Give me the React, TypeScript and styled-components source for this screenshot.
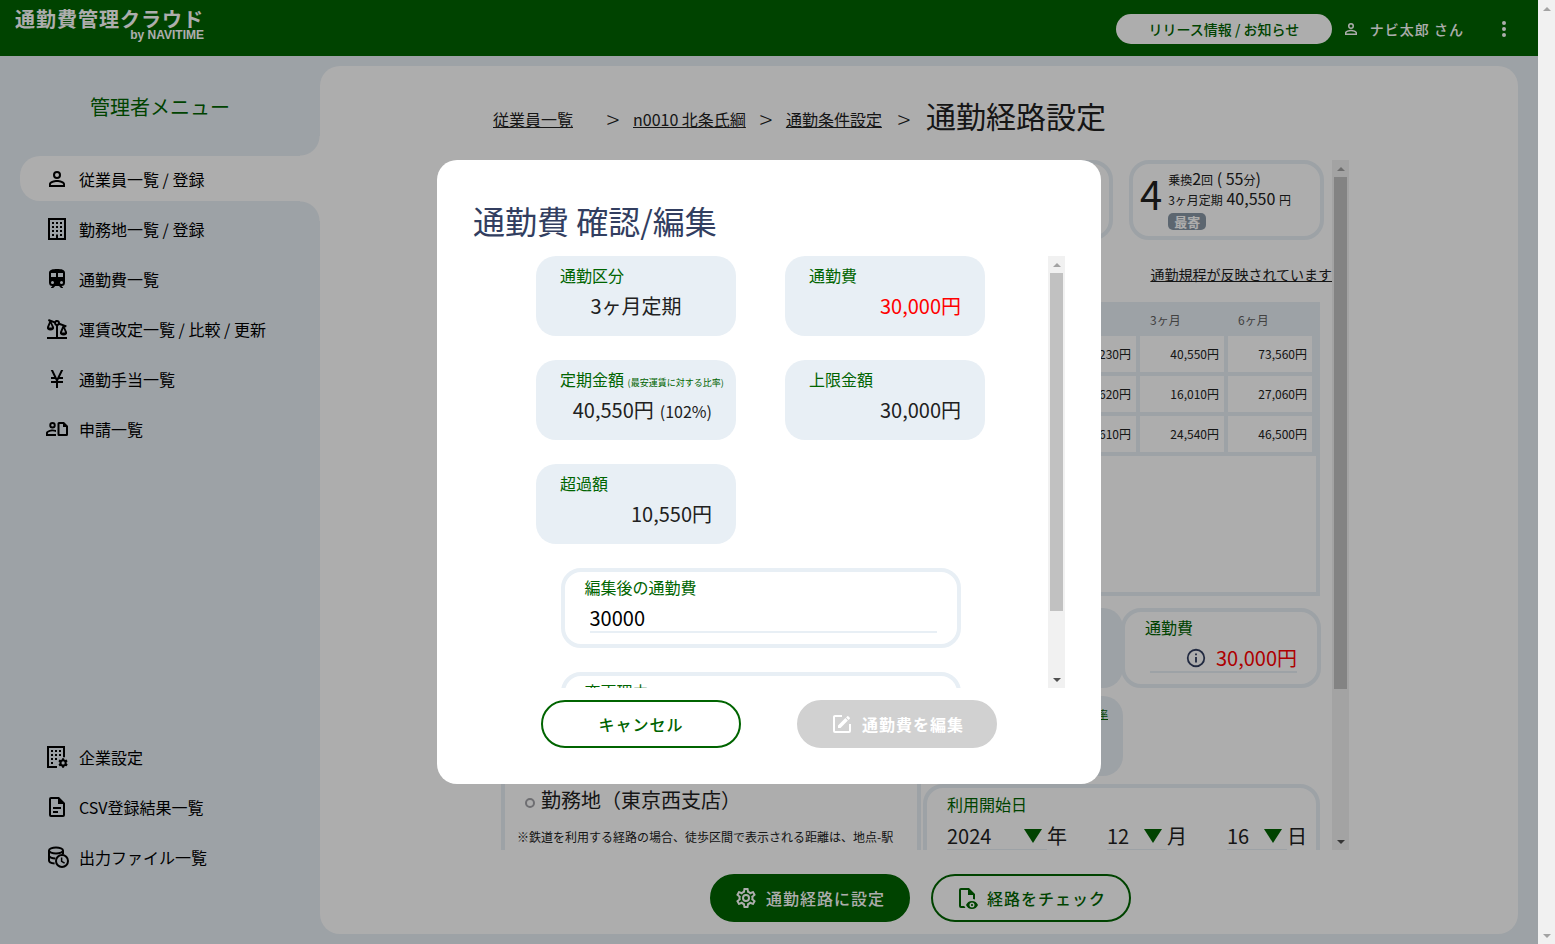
import React from "react";
import styled, { createGlobalStyle, css } from "styled-components";

const green = "#006400";
const pale = "#e8eff5";
const navy = "#323e60";

const GlobalStyle = createGlobalStyle`
  *, *::before, *::after { box-sizing: border-box; }
  body {
    margin: 0;
    font-family: "Noto Sans CJK JP", "Noto Sans", sans-serif;
    font-size: 16px;
    line-height: 24px;
    color: #212121;
  }
  button, input, select { font: inherit; color: inherit; margin: 0; }
  button { cursor: pointer; }
  a { color: inherit; }
  h1, h2, p, ul, ol, dl, dd { margin: 0; padding: 0; font-weight: 400; }
  ul, ol { list-style: none; }
`;

/* ---------- icons ---------- */

const paths = {
  account:
    "M12,4A4,4 0 0,1 16,8A4,4 0 0,1 12,12A4,4 0 0,1 8,8A4,4 0 0,1 12,4M12,6A2,2 0 0,0 10,8A2,2 0 0,0 12,10A2,2 0 0,0 14,8A2,2 0 0,0 12,6M12,13C14.67,13 20,14.33 20,17V20H4V17C4,14.33 9.33,13 12,13M12,14.9C9.03,14.9 5.9,16.36 5.9,17V18.1H18.1V17C18.1,16.36 14.97,14.9 12,14.9Z",
  building:
    "M19,3V21H13V17.5H11V21H5V3H19M15,7H17V5H15V7M11,7H13V5H11V7M7,7H9V5H7V7M15,11H17V9H15V11M11,11H13V9H11V11M7,11H9V9H7V11M15,15H17V13H15V15M11,15H13V13H11V15M7,15H9V13H7V15M7,19H9V17H7V19M15,19H17V17H15V19M21,1H3V23H21V1Z",
  train:
    "M12,2C8,2 4,2.5 4,6V15.5A3.5,3.5 0 0,0 7.5,19L6,20.5V21H8.23L10.23,19H14L16,21H18V20.5L16.5,19A3.5,3.5 0 0,0 20,15.5V6C20,2.5 16.42,2 12,2M7.5,17A1.5,1.5 0 0,1 6,15.5A1.5,1.5 0 0,1 7.5,14A1.5,1.5 0 0,1 9,15.5A1.5,1.5 0 0,1 7.5,17M11,10H6V6H11V10M13,10V6H18V10H13M16.5,17A1.5,1.5 0 0,1 15,15.5A1.5,1.5 0 0,1 16.5,14A1.5,1.5 0 0,1 18,15.5A1.5,1.5 0 0,1 16.5,17Z",
  scale:
    "M13,20V8.8C13.5,8.6 14,8.3 14.3,7.9L17.5,9.1L15,15C14.5,17 16,18.5 18.5,18.5C21,18.5 22.5,17 22,15L19.7,9.9L21,10.4L21.7,8.5L15,6C15,4.3 13.7,3 12,3C11,3 10.1,3.5 9.5,4.2L3.7,2.1L3,4L4.3,4.5L2,10C1.5,12 3,13.5 5.5,13.5C8,13.5 9.5,12 9,10L6.6,5.3L9.1,6.2C9.1,7.4 9.9,8.4 11,8.8V20H2V22H22V20H13M12,5A1,1 0 0,1 13,6A1,1 0 0,1 12,7A1,1 0 0,1 11,6A1,1 0 0,1 12,5M5.5,6.6L7.1,10.5H3.9L5.5,6.6M18.5,11.4L20.1,15.5H16.9L18.5,11.4Z",
  yen:
    "M11,21V16H6V14H11V13.71L10.16,12H6V10H9.19L5.77,3H8L12,11.18L16,3H18.23L14.82,10H18V12H13.84L13,13.71V14H18V16H13V21H11Z",
  request:
    "M7.5,5A3.2,3.2 0 0,1 10.7,8.2A3.2,3.2 0 0,1 7.5,11.4A3.2,3.2 0 0,1 4.3,8.2A3.2,3.2 0 0,1 7.5,5M7.5,6.9A1.3,1.3 0 0,0 6.2,8.2A1.3,1.3 0 0,0 7.5,9.5A1.3,1.3 0 0,0 8.8,8.2A1.3,1.3 0 0,0 7.5,6.9M7.5,12.4C8.6,12.4 9.9,12.6 11,13V15C9.9,14.6 8.6,14.3 7.5,14.3C5,14.3 2.9,15.4 2.9,16V17.1H11V19H1V16C1,13.6 5.3,12.4 7.5,12.4M14,5H19L23,9V17.5A1.5,1.5 0 0,1 21.5,19H14A1.5,1.5 0 0,1 12.5,17.5V6.5A1.5,1.5 0 0,1 14,5M14.5,7V17H21V10H18V7H14.5Z",
  buildingCog:
    "M2,1H20V12.2H18V3H4V21H7V23H2V1M6,5H8V7H6V5M10,5H12V7H10V5M14,5H16V7H14V5M6,9H8V11H6V9M10,9H12V11H10V9M14,9H16V11H14V9M6,13H8V15H6V13M10,13H12V15H10V13M6,17H8V19H6V17M7,21H12V23H7V21M17.2,13.2H19L19.3,14.5L20.2,15L21.5,14.6L22.6,16.3L21.6,17.2V18.6L22.7,19.6L21.6,21.3L20.2,20.9L19.3,21.4L19,22.8H17.2L16.8,21.4L15.9,20.9L14.6,21.3L13.5,19.6L14.5,18.6V17.2L13.4,16.3L14.5,14.6L15.9,15L16.8,14.5L17.2,13.2M18.1,16.3A1.6,1.6 0 0,0 16.5,17.9A1.6,1.6 0 0,0 18.1,19.5A1.6,1.6 0 0,0 19.7,17.9A1.6,1.6 0 0,0 18.1,16.3Z",
  file:
    "M6,2A2,2 0 0,0 4,4V20A2,2 0 0,0 6,22H18A2,2 0 0,0 20,20V8L14,2H6M6,4H13V9H18V20H6V4M8,12V14H16V12H8M8,16V18H13V16H8Z",
  cog:
    "M12,8A4,4 0 0,1 16,12A4,4 0 0,1 12,16A4,4 0 0,1 8,12A4,4 0 0,1 12,8M12,10A2,2 0 0,0 10,12A2,2 0 0,0 12,14A2,2 0 0,0 14,12A2,2 0 0,0 12,10M10,22C9.75,22 9.54,21.82 9.5,21.58L9.13,18.93C8.5,18.68 7.96,18.34 7.44,17.94L4.95,18.95C4.73,19.03 4.46,18.95 4.34,18.73L2.34,15.27C2.21,15.05 2.27,14.78 2.46,14.63L4.57,12.97L4.5,12L4.57,11L2.46,9.37C2.27,9.22 2.21,8.95 2.34,8.73L4.34,5.27C4.46,5.05 4.73,4.96 4.95,5.05L7.44,6.05C7.96,5.66 8.5,5.32 9.13,5.07L9.5,2.42C9.54,2.18 9.75,2 10,2H14C14.25,2 14.46,2.18 14.5,2.42L14.87,5.07C15.5,5.32 16.04,5.66 16.56,6.05L19.05,5.05C19.27,4.96 19.54,5.05 19.66,5.27L21.66,8.73C21.79,8.95 21.73,9.22 21.54,9.37L19.43,11L19.5,12L19.43,13L21.54,14.63C21.73,14.78 21.79,15.05 21.66,15.27L19.66,18.73C19.54,18.95 19.27,19.04 19.05,18.95L16.56,17.95C16.04,18.34 15.5,18.68 14.87,18.93L14.5,21.58C14.46,21.82 14.25,22 14,22H10M11.25,4L10.88,6.61C9.68,6.86 8.62,7.5 7.85,8.39L5.44,7.35L4.69,8.65L6.8,10.2C6.4,11.37 6.4,12.64 6.8,13.8L4.68,15.36L5.43,16.66L7.86,15.62C8.63,16.5 9.68,17.14 10.87,17.38L11.24,20H12.76L13.13,17.39C14.32,17.14 15.37,16.5 16.14,15.62L18.57,16.66L19.32,15.36L17.2,13.81C17.6,12.64 17.6,11.37 17.2,10.2L19.31,8.65L18.56,7.35L16.15,8.39C15.38,7.5 14.32,6.86 13.12,6.62L12.75,4H11.25Z",
  fileEye:
    "M17,18C17.56,18 18,18.44 18,19C18,19.56 17.56,20 17,20C16.44,20 16,19.56 16,19C16,18.44 16.44,18 17,18M17,15C14.27,15 11.94,16.66 11,19C11.94,21.34 14.27,23 17,23C19.73,23 22.06,21.34 23,19C22.06,16.66 19.73,15 17,15M17,21.5A2.5,2.5 0 0,1 14.5,19A2.5,2.5 0 0,1 17,16.5A2.5,2.5 0 0,1 19.5,19A2.5,2.5 0 0,1 17,21.5M9.27,20H6V4H13V9H18V13.07C18.7,13.15 19.36,13.32 20,13.56V8L14,2H6A2,2 0 0,0 4,4V20A2,2 0 0,0 6,22H10.5C10,21.41 9.59,20.73 9.27,20Z",
  edit:
    "M5,3C3.89,3 3,3.89 3,5V19A2,2 0 0,0 5,21H19A2,2 0 0,0 21,19V12H19V19H5V5H12V3H5M17.78,4C17.61,4 17.43,4.07 17.3,4.2L16.08,5.41L18.58,7.91L19.8,6.7C20.06,6.44 20.06,6 19.8,5.75L18.25,4.2C18.12,4.07 17.95,4 17.78,4M15.37,6.12L8,13.5V16H10.5L17.87,8.62L15.37,6.12Z",
  info:
    "M11,9H13V7H11M12,20C7.59,20 4,16.41 4,12C4,7.59 7.59,4 12,4C16.41,4 20,7.59 20,12C20,16.41 16.41,20 12,20M12,2A10,10 0 0,0 2,12A10,10 0 0,0 12,22A10,10 0 0,0 22,12A10,10 0 0,0 12,2M11,17H13V11H11V17Z",
  dots:
    "M12,16A2,2 0 0,1 14,18A2,2 0 0,1 12,20A2,2 0 0,1 10,18A2,2 0 0,1 12,16M12,10A2,2 0 0,1 14,12A2,2 0 0,1 12,14A2,2 0 0,1 10,12A2,2 0 0,1 12,10M12,4A2,2 0 0,1 14,6A2,2 0 0,1 12,8A2,2 0 0,1 10,6A2,2 0 0,1 12,4Z",
};

type IconName = keyof typeof paths | "databaseClock";

const IconSvg = styled.svg`
  flex: none;
  display: block;
  fill: currentColor;
`;

function Icon({ name, size = 24 }: { name: IconName; size?: number }) {
  return (
    <IconSvg width={size} height={size} viewBox="0 0 24 24" aria-hidden="true">
      {name === "databaseClock" ? (
        <g fill="none" stroke="currentColor" strokeWidth="2">
          <ellipse cx="11" cy="5.5" rx="7" ry="3" />
          <path d="M4,5.5V15.5C4,17 6.2,18.3 9.6,18.6M4,10.5C4,12.2 7,13.5 10.4,13.5M18,5.5V9.6" />
          <circle cx="17" cy="16" r="6" />
          <path d="M16.6,12.4V16.4L19.6,18.2" strokeWidth="1.5" />
        </g>
      ) : (
        <path fillRule={name === "scale" ? "evenodd" : "nonzero"} d={paths[name]} />
      )}
    </IconSvg>
  );
}

/* ---------- scroll bars ---------- */

const Track = styled.div`
  flex: none;
  width: 17px;
  display: flex;
  flex-direction: column;
  align-items: center;
  background: #f1f1f1;
`;
const Arrow = styled.span<{ $down?: boolean; $idle?: boolean }>`
  flex: none;
  width: 17px;
  height: 17px;
  display: grid;
  place-items: center;
  &::before {
    content: "";
    border: 4px solid transparent;
    border-top-width: 0;
    border-bottom: 4px solid ${(p) => (p.$idle ? "#a3a3a3" : "#505050")};
    ${(p) => p.$down && "rotate: 180deg;"}
  }
`;
const Thumb = styled.span`
  width: 13px;
  background: #c1c1c1;
`;
const Rail = styled.span<{ $share: number }>`
  flex: 1;
  min-height: 0;
  display: grid;
  grid-template-rows: ${(p) => p.$share}fr ${(p) => 100 - p.$share}fr;
`;

function ScrollBar({ share }: { share?: number }) {
  return (
    <Track aria-hidden="true">
      <Arrow $idle />
      <Rail $share={share ?? 100}>{share ? <Thumb /> : null}</Rail>
      <Arrow $down $idle={!share} />
    </Track>
  );
}

/* ---------- page frame ---------- */

const Shell = styled.div`
  display: flex;
  height: 100vh;
`;
const AppArea = styled.div`
  position: relative;
  flex: 1;
  min-width: 0;
  display: flex;
  flex-direction: column;
  background: ${pale};
`;
const Header = styled.header`
  flex: none;
  height: 56px;
  display: flex;
  justify-content: space-between;
  padding: 0 22px 0 15px;
  background: ${green};
  color: #fff;
`;
const Brand = styled.div`
  display: flex;
  flex-direction: column;
  align-items: flex-end;
  padding-top: 8px;
`;
const BrandName = styled.span`
  font-size: 20px;
  line-height: 22px;
  font-weight: 700;
  letter-spacing: 1px;
`;
const BrandBy = styled.span`
  font-family: "Liberation Sans", sans-serif;
  font-size: 12px;
  line-height: 10px;
  font-weight: 700;
`;
const HeaderTools = styled.div`
  display: flex;
  align-items: center;
  padding-top: 1px;
`;
const NewsButton = styled.button`
  width: 216px;
  height: 30px;
  margin-right: 10px;
  border: 0;
  border-radius: 15px;
  background: #fff;
  color: ${green};
  font-size: 14px;
  font-weight: 500;
`;
const UserName = styled.span`
  display: flex;
  align-items: center;
  gap: 10px;
  margin-right: 28px;
  font-size: 14px;
  font-weight: 500;
  letter-spacing: 1px;
`;
const MenuButton = styled.button`
  display: flex;
  padding: 0;
  border: 0;
  background: none;
`;
const Body = styled.div`
  flex: 1;
  min-height: 0;
  display: flex;
`;

/* ---------- side menu ---------- */

const Sidebar = styled.nav`
  flex: none;
  width: 320px;
  display: flex;
  flex-direction: column;
  padding: 0 0 65px 20px;
`;
const SidebarTitle = styled.h2`
  height: 100px;
  padding-right: 20px;
  font-size: 20px;
  line-height: 102px;
  text-align: center;
  color: ${green};
`;
const MenuList = styled.ul`
  display: flex;
  flex-direction: column;
  gap: 5px;
  &:last-child { margin-top: auto; }
`;
const MenuLink = styled.a<{ $active?: boolean }>`
  position: relative;
  display: flex;
  align-items: center;
  gap: 10px;
  height: 45px;
  padding-left: 25px;
  color: #000;
  text-decoration: none;
  ${(p) =>
    p.$active &&
    css`
      background: #fff;
      border-radius: 20px 0 0 20px;
      &::before,
      &::after {
        content: "";
        position: absolute;
        right: 0;
        width: 20px;
        height: 20px;
        background: radial-gradient(circle at 0 0, transparent 19px, #fff 20px);
      }
      &::before { bottom: 100%; }
      &::after { top: 100%; transform: scaleY(-1); }
    `}
`;

const mainMenu: [IconName, string][] = [
  ["account", "従業員一覧 / 登録"],
  ["building", "勤務地一覧 / 登録"],
  ["train", "通勤費一覧"],
  ["scale", "運賃改定一覧 / 比較 / 更新"],
  ["yen", "通勤手当一覧"],
  ["request", "申請一覧"],
];
const subMenu: [IconName, string][] = [
  ["buildingCog", "企業設定"],
  ["file", "CSV登録結果一覧"],
  ["databaseClock", "出力ファイル一覧"],
];

function Menu({ items, active }: { items: [IconName, string][]; active?: number }) {
  return (
    <MenuList>
      {items.map(([icon, label], i) => (
        <li key={label}>
          <MenuLink href="#" $active={i === active}>
            <Icon name={icon} />
            {label}
          </MenuLink>
        </li>
      ))}
    </MenuList>
  );
}

/* ---------- main panel ---------- */

const Panel = styled.main`
  flex: 1;
  min-width: 0;
  display: flex;
  flex-direction: column;
  align-items: center;
  margin: 10px 20px 10px 0;
  border-radius: 20px;
  background: #fff;
`;
const Breadcrumb = styled.ol`
  flex: none;
  width: 860px;
  height: 94px;
  display: flex;
  align-items: center;
  padding: 12px 0 0 4px;
  li:first-child { width: 100px; }
  li:nth-last-child(2) { width: 44px; }
`;
const Separator = styled.li`
  width: 40px;
  font-size: 24px;
  font-weight: 300;
  text-align: center;
`;
const PageTitle = styled.h1`
  padding-bottom: 8px;
  font-size: 30px;
  line-height: 44px;
`;
const ScrollFrame = styled.div`
  flex: 1;
  min-height: 0;
  width: 860px;
  display: flex;
`;
const ScrollBody = styled.div`
  flex: 1;
  min-width: 0;
  overflow: hidden;
  padding-left: 7px;
`;
const RouteTabs = styled.div`
  display: flex;
  gap: 16px;
`;
const RouteTab = styled.button`
  flex: none;
  width: 195px;
  height: 80px;
  display: flex;
  align-items: flex-start;
  gap: 6px;
  padding: 5px 7px 0;
  border: 4px solid ${pale};
  border-radius: 20px;
  background: #fff;
  text-align: left;
`;
const RouteNo = styled.span`
  font-size: 40px;
  line-height: 48px;
`;
const RouteFacts = styled.span`
  display: flex;
  flex-direction: column;
  align-items: flex-start;
  font-size: 12px;
`;
const RouteFact = styled.span`
  height: 20px;
  line-height: 18px;
  white-space: pre;
  big { font-size: 16px; }
`;
const Nearest = styled.span`
  margin-top: 4px;
  padding: 0 6px;
  border-radius: 5px;
  background: #8897a6;
  color: #fff;
  font-size: 13px;
  font-weight: 700;
  line-height: 17px;
`;
const RuleNote = styled.p`
  height: 62px;
  padding-top: 22px;
  font-size: 14px;
  text-align: right;
`;
const Columns = styled.div`
  display: flex;
  gap: 2px;
  padding: 0 12px 0 5px;
`;
const RoutePanel = styled.section`
  width: 420px;
  height: 600px;
  padding: 480px 12px 0;
  border: 4px solid ${pale};
  overflow: hidden;
`;
const Station = styled.p`
  display: flex;
  align-items: center;
  gap: 6px;
  padding-left: 8px;
  font-size: 20px;
  line-height: 28px;
  white-space: nowrap;
  &::before {
    content: "";
    width: 10px;
    height: 10px;
    margin-top: 6px;
    border: 2px solid #a3a3a8;
    border-radius: 50%;
  }
`;
const RouteNote = styled.p`
  padding-top: 14px;
  font-size: 12px;
  line-height: 18px;
  white-space: nowrap;
`;
const CostColumn = styled.section`
  flex: 1;
  min-width: 0;
  display: flex;
  flex-direction: column;
  gap: 8px;
`;
const FareBox = styled.div`
  height: 294px;
  margin-bottom: 4px;
  border: 4px solid ${pale};
  overflow: hidden;
`;
const FareTable = styled.table`
  width: 100%;
  border-spacing: 4px;
  table-layout: fixed;
  background: ${pale};
  font-size: 12px;
  line-height: 20px;
  th { height: 22px; padding: 0 10px 2px; font-weight: 400; text-align: left; color: #616161; }
  td { height: 36px; padding: 0 5px; background: #fff; text-align: right; }
  th:not(:first-child) { width: 84px; }
`;
const CardRow = styled.div`
  display: grid;
  grid-template-columns: 198px 198px;
`;

/* ---------- shared cards ---------- */

const Card = styled.div<{ $outlined?: boolean; $wide?: boolean }>`
  flex: none;
  width: ${(p) => (p.$wide ? "400px" : "200px")};
  height: 80px;
  padding: ${(p) => (p.$outlined ? "3px 20px 0" : "7px 24px 0")};
  border: ${(p) => (p.$outlined ? `4px solid ${pale}` : "0")};
  border-radius: 20px;
  background: ${(p) => (p.$outlined ? "#fff" : pale)};
  white-space: nowrap;
`;
const CardLabel = styled.div`
  display: block;
  height: 24px;
  color: ${green};
  small { font-size: 9px; line-height: 9px; }
`;
const CardValue = styled.div<{ $red?: boolean; $center?: boolean }>`
  padding-top: 3px;
  font-size: 20px;
  line-height: 32px;
  text-align: ${(p) => (p.$center ? "center" : "right")};
  color: ${(p) => (p.$red ? "#f00" : "inherit")};
  small { margin-left: 6px; font-size: 16px; line-height: 16px; }
`;
const FeeValue = styled.div`
  display: flex;
  align-items: center;
  justify-content: flex-end;
  gap: 9px;
  height: 34px;
  margin-left: 5px;
  padding-top: 6px;
  border-bottom: 2px solid ${pale};
  font-size: 20px;
  color: #f00;
  svg { color: ${navy}; }
`;
const RatioLink = styled.a`
  display: block;
  margin-right: -9px;
  font-size: 10px;
  line-height: 22px;
  text-align: right;
  color: ${green};
`;
const DateCard = styled.fieldset`
  min-width: 0;
  height: 110px;
  margin: 0;
  padding: 4px 8px 0 20px;
  border: 4px solid ${pale};
  border-radius: 20px;
`;
const DateTitle = styled.legend`
  float: left;
  width: 100%;
  padding: 0;
  line-height: 24px;
  color: ${green};
`;
const DateFields = styled.div`
  display: flex;
  gap: 40px;
  clear: both;
  padding-top: 4px;
  font-size: 20px;
`;
const DateField = styled.label`
  display: flex;
  align-items: flex-start;
  line-height: 32px;
`;
const SelectBox = styled.span<{ $width: number }>`
  display: grid;
  align-items: center;
  width: ${(p) => p.$width}px;
  height: 30px;
  padding-top: 2px;
  border-bottom: 1px solid ${pale};
  select, svg { grid-area: 1 / 1; }
  select {
    appearance: none;
    width: 100%;
    height: 27px;
    padding: 0;
    border: 0;
    background: none;
    line-height: 27px;
  }
  svg { justify-self: end; margin-right: 5px; fill: ${green}; pointer-events: none; }
`;

function DateSelect({ value, unit, width }: { value: string; unit: string; width: number }) {
  return (
    <DateField>
      <SelectBox $width={width}>
        <select defaultValue={value}>
          <option>{value}</option>
        </select>
        <svg width="18" height="14" viewBox="0 0 18 14" aria-hidden="true">
          <path d="M0,0H18L9,14Z" />
        </svg>
      </SelectBox>
      {unit}
    </DateField>
  );
}

/* ---------- buttons ---------- */

const PillButton = styled.button<{ $kind: "solid" | "outline" }>`
  width: 200px;
  height: 48px;
  display: flex;
  align-items: center;
  justify-content: center;
  gap: 8px;
  padding: 0;
  border: 2px solid ${green};
  border-radius: 24px;
  background: ${(p) => (p.$kind === "solid" ? green : "#fff")};
  color: ${(p) => (p.$kind === "solid" ? "#fff" : green)};
  font-weight: 500;
  letter-spacing: 1px;
  &:disabled {
    border-color: #d1d1d1;
    background: #d1d1d1;
    color: #fff;
    font-weight: 700;
    cursor: default;
  }
`;
const PanelActions = styled.div`
  flex: none;
  display: flex;
  gap: 21px;
  padding: 24px 0 12px 2px;
`;

/* ---------- dialog ---------- */

const Overlay = styled.div`
  position: absolute;
  inset: 0;
  display: flex;
  align-items: center;
  justify-content: center;
  background: rgba(0, 0, 0, 0.32);
`;
const Dialog = styled.section`
  width: 664px;
  max-width: 90%;
  padding: 36px;
  border-radius: 20px;
  background: #fff;
`;
const DialogTitle = styled.h2`
  margin-bottom: 12px;
  font-size: 32px;
  line-height: 48px;
  color: ${navy};
`;
const DialogFrame = styled.div`
  display: flex;
  height: 432px;
`;
const DialogBody = styled.div`
  flex: 1;
  min-width: 0;
  display: flex;
  flex-direction: column;
  align-items: center;
  gap: 24px;
  overflow: hidden;
`;
const CardGrid = styled.div`
  display: grid;
  grid-template-columns: 200px 200px;
  gap: 24px 49px;
`;
const AmountInput = styled.input`
  display: block;
  width: 347px;
  height: 34px;
  margin-left: 5px;
  padding: 4px 0 0;
  border: 0;
  border-bottom: 2px solid ${pale};
  background: none;
  font-size: 20px;
  color: #000;
  outline: 0;
`;
const DialogActions = styled.div`
  display: flex;
  justify-content: center;
  gap: 56px;
  padding-top: 12px;
`;

function EditDialog() {
  return (
    <Overlay>
      <Dialog role="dialog" aria-modal="true" aria-labelledby="dialog-title">
        <DialogTitle id="dialog-title">通勤費 確認/編集</DialogTitle>
        <DialogFrame>
          <DialogBody>
            <CardGrid>
              <Card>
                <CardLabel>通勤区分</CardLabel>
                <CardValue $center>3ヶ月定期</CardValue>
              </Card>
              <Card>
                <CardLabel>通勤費</CardLabel>
                <CardValue $red>30,000円</CardValue>
              </Card>
              <Card>
                <CardLabel>
                  定期金額 <small>(最安運賃に対する比率)</small>
                </CardLabel>
                <CardValue>
                  40,550円<small>(102%)</small>
                </CardValue>
              </Card>
              <Card>
                <CardLabel>上限金額</CardLabel>
                <CardValue>30,000円</CardValue>
              </Card>
              <Card>
                <CardLabel>超過額</CardLabel>
                <CardValue>10,550円</CardValue>
              </Card>
            </CardGrid>
            <Card $outlined $wide>
              <CardLabel as="label" htmlFor="amount">
                編集後の通勤費
              </CardLabel>
              <AmountInput id="amount" defaultValue="30000" />
            </Card>
            <Card $outlined $wide>
              <CardLabel as="label" htmlFor="reason">
                変更理由
              </CardLabel>
              <AmountInput id="reason" />
            </Card>
          </DialogBody>
          <ScrollBar share={85} />
        </DialogFrame>
        <DialogActions>
          <PillButton type="button" $kind="outline">
            キャンセル
          </PillButton>
          <PillButton type="button" $kind="solid" disabled>
            <Icon name="edit" />
            通勤費を編集
          </PillButton>
        </DialogActions>
      </Dialog>
    </Overlay>
  );
}

const fares = [
  ["14,230円", "40,550円", "73,560円"],
  ["5,620円", "16,010円", "27,060円"],
  ["8,610円", "24,540円", "46,500円"],
];

export default function App() {
  return (
    <Shell>
      <GlobalStyle />
      <AppArea>
        <Header>
          <Brand>
            <BrandName>通勤費管理クラウド</BrandName>
            <BrandBy>by NAVITIME</BrandBy>
          </Brand>
          <HeaderTools>
            <NewsButton type="button">リリース情報 / お知らせ</NewsButton>
            <UserName>
              <Icon name="account" size={18} />
              ナビ太郎 さん
            </UserName>
            <MenuButton type="button" aria-label="メニュー">
              <Icon name="dots" />
            </MenuButton>
          </HeaderTools>
        </Header>
        <Body>
          <Sidebar>
            <SidebarTitle>管理者メニュー</SidebarTitle>
            <Menu items={mainMenu} active={0} />
            <Menu items={subMenu} />
          </Sidebar>
          <Panel>
            <Breadcrumb>
              <li>
                <a href="#">従業員一覧</a>
              </li>
              <Separator>&gt;</Separator>
              <li>
                <a href="#">n0010 北条氏綱</a>
              </li>
              <Separator>&gt;</Separator>
              <li>
                <a href="#">通勤条件設定</a>
              </li>
              <Separator>&gt;</Separator>
              <li>
                <PageTitle>通勤経路設定</PageTitle>
              </li>
            </Breadcrumb>
            <ScrollFrame>
              <ScrollBody>
                <RouteTabs>
                  <RouteTab type="button" aria-label="1" />
                  <RouteTab type="button" aria-label="2" />
                  <RouteTab type="button" aria-label="3" />
                  <RouteTab type="button">
                    <RouteNo>4</RouteNo>
                    <RouteFacts>
                      <RouteFact>
                        乗換<big>2</big>回<big> ( 55</big>分<big>)</big>
                      </RouteFact>
                      <RouteFact>
                        3ヶ月定期<big> 40,550 </big>円
                      </RouteFact>
                      <Nearest>最寄</Nearest>
                    </RouteFacts>
                  </RouteTab>
                </RouteTabs>
                <RuleNote>
                  <a href="#">通勤規程が反映されています</a>
                </RuleNote>
                <Columns>
                  <RoutePanel>
                    <Station>勤務地（東京西支店）</Station>
                    <RouteNote>※鉄道を利用する経路の場合、徒歩区間で表示される距離は、地点-駅</RouteNote>
                  </RoutePanel>
                  <CostColumn>
                    <FareBox>
                      <FareTable>
                        <thead>
                          <tr>
                            <th />
                            <th />
                            <th>3ヶ月</th>
                            <th>6ヶ月</th>
                          </tr>
                        </thead>
                        <tbody>
                          {fares.map((row) => (
                            <tr key={row[0]}>
                              <td />
                              {row.map((fare) => (
                                <td key={fare}>{fare}</td>
                              ))}
                            </tr>
                          ))}
                        </tbody>
                      </FareTable>
                    </FareBox>
                    <CardRow>
                      <Card />
                      <Card $outlined>
                        <CardLabel>通勤費</CardLabel>
                        <FeeValue>
                          <Icon name="info" size={22} />
                          30,000円
                        </FeeValue>
                      </Card>
                    </CardRow>
                    <Card>
                      <RatioLink href="#">比率</RatioLink>
                    </Card>
                    <DateCard>
                      <DateTitle>利用開始日</DateTitle>
                      <DateFields>
                        <DateSelect value="2024" unit="年" width={100} />
                        <DateSelect value="12" unit="月" width={60} />
                        <DateSelect value="16" unit="日" width={60} />
                      </DateFields>
                    </DateCard>
                  </CostColumn>
                </Columns>
              </ScrollBody>
              <ScrollBar share={78} />
            </ScrollFrame>
            <PanelActions>
              <PillButton type="button" $kind="solid">
                <Icon name="cog" />
                通勤経路に設定
              </PillButton>
              <PillButton type="button" $kind="outline">
                <Icon name="fileEye" />
                経路をチェック
              </PillButton>
            </PanelActions>
          </Panel>
        </Body>
        <EditDialog />
      </AppArea>
      <ScrollBar />
    </Shell>
  );
}
